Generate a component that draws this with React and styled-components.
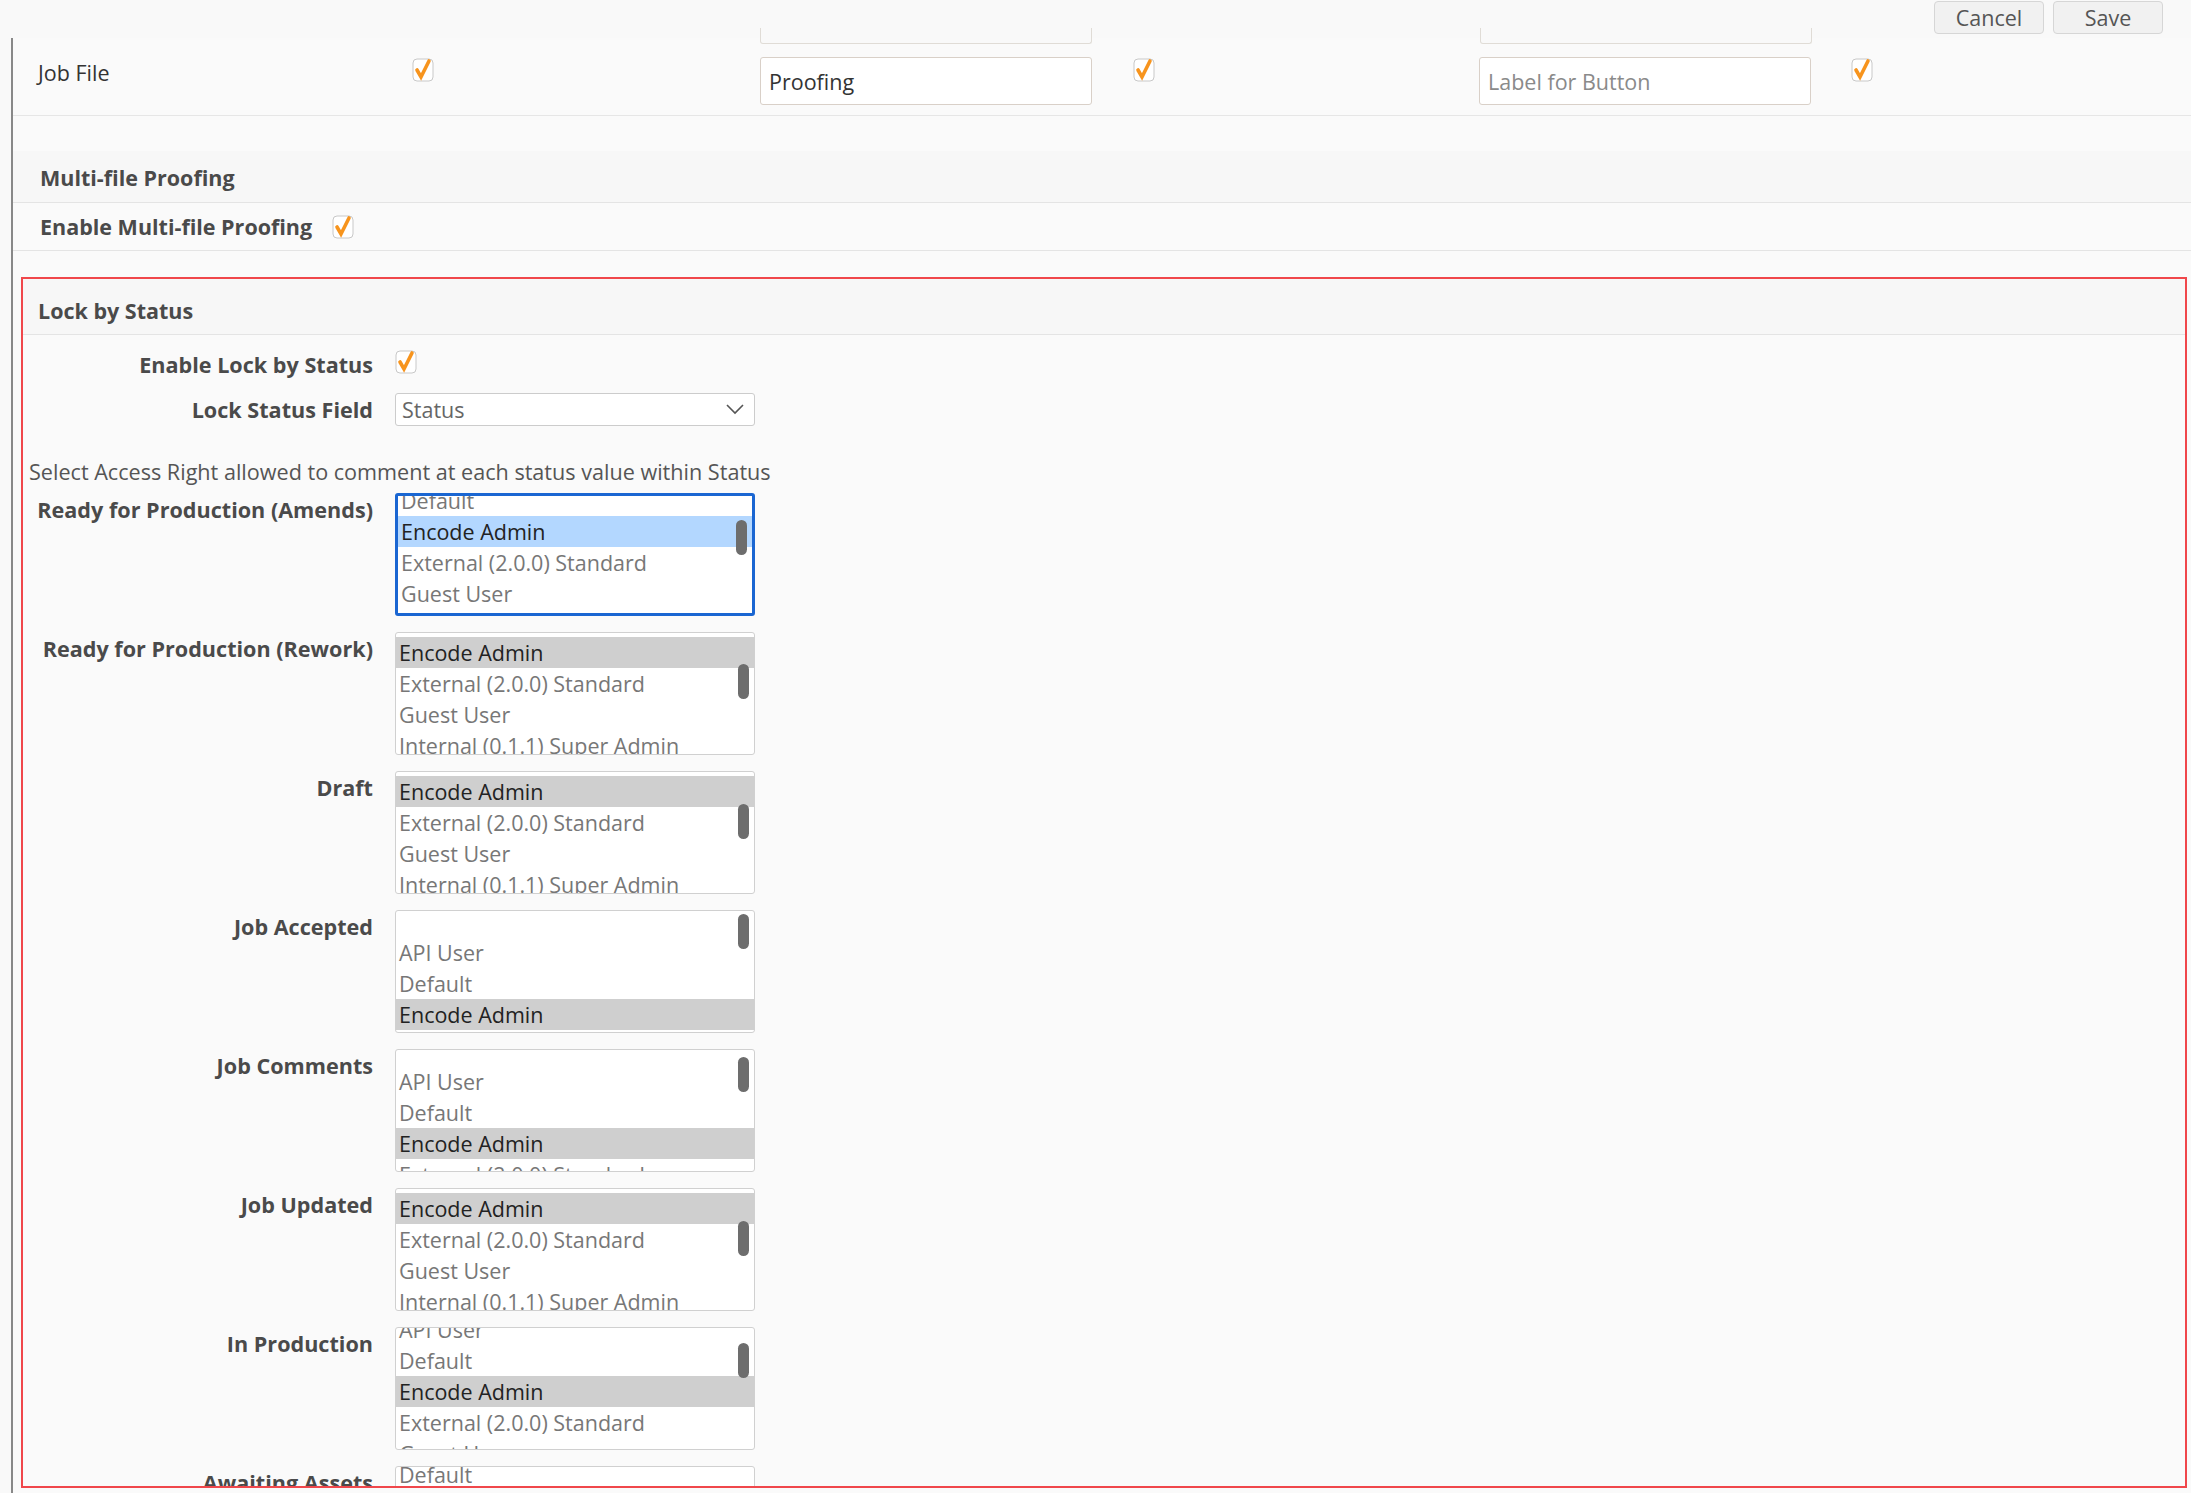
import React from "react";
import styled, { createGlobalStyle } from "styled-components";

const Global = createGlobalStyle`
  html, body { margin: 0; padding: 0; background: #f9f9f9; }
  body { font-family: "Open Sans", "Noto Sans", sans-serif; color: #555; }
`;

const Page = styled.div`
  width: 2191px; height: 1493px; overflow: hidden; position: relative; background: #f9f9f9;
`;
const TopBar = styled.div`
  height: 38px; display: flex; justify-content: flex-end; align-items: flex-start; gap: 9px;
  padding-right: 28px; box-sizing: border-box;
`;
const Btn = styled.button`
  width: 110px; height: 33px; margin-top: 1px; border: 1px solid #d6d6d6; border-radius: 4px;
  background: #f1f1f1; font-family: inherit; font-size: 21.5px; color: #555; padding: 0;
`;
const Body = styled.div`
  border-left: 2px solid #888; margin-left: 11px; min-height: 1460px; background: #fafafa;
`;
const JobRow = styled.div`
  height: 77px; border-bottom: 1px solid #e6e6e6; display: grid;
  grid-template-columns: 399px 348px 373px 346px 372px 1fr; position: relative;
`;
const Cell = styled.div`
  display: flex; align-items: flex-start; padding-top: ${p => p.$pt || 0}px;
  padding-left: ${p => p.$pl || 0}px; font-size: 21.5px; color: #333;
`;
const TextInput = styled.div`
  width: 332px; height: 48px; box-sizing: border-box; border: 1px solid #d9d0c8; border-radius: 3px;
  background: #fff; display: flex; align-items: center; padding-left: 8px; font-size: 21.5px;
  color: ${p => p.$ph ? "#8a8a8a" : "#333"}; margin-top: 19px;
`;
const GhostInput = styled.div`
  position: absolute; top: -10px; left: ${p => p.$x}px; width: 332px; height: 16px; box-sizing: border-box;
  border: 1px solid #e0dcd6; border-top: none; border-radius: 0 0 3px 3px; background: #f9f9f9;
`;
const Spacer = styled.div` height: ${p => p.$h}px; `;
const SectionHead = styled.div`
  height: ${p => p.$h || 52}px; display: flex; align-items: center; padding-left: ${p => p.$pl || 27}px;
  padding-top: ${p => p.$pt || 0}px; box-sizing: border-box;
  font-weight: 700; font-size: 21.5px; color: #4a4a4a; background: #f7f7f7; border-bottom: 1px solid #e4e4e4;
`;
const InlineRow = styled.div`
  height: 47px; display: flex; align-items: center; gap: 20px; padding-left: 27px;
  font-weight: 700; font-size: 21.5px; color: #4a4a4a; border-bottom: 1px solid #e4e4e4;
`;
const RedBox = styled.div`
  margin: 26px 4px 0 8px; border: 2px solid #f0474b; height: 1207px; overflow: hidden; background: #fafafa;
`;
const FormRow = styled.div`
  display: grid; grid-template-columns: 350px 1fr; column-gap: 22px; align-items: center;
  height: ${p => p.$h}px;
`;
const Label = styled.div`
  text-align: right; font-weight: 700; font-size: 21.6px; color: #4a4a4a; white-space: nowrap;
  padding-top: ${p => p.$pt || 0}px;
`;
const Select = styled.div`
  width: 360px; height: 33px; box-sizing: border-box; border: 1px solid #ccc; border-radius: 3px; background: #fff;
  display: flex; align-items: center; justify-content: space-between; padding: 0 10px 0 6px; font-size: 21.5px; color: #666;
`;
const Hint = styled.div` font-size: 21.6px; color: #555; padding: 26px 0 0 6px; height: 48px; box-sizing: border-box; `;
const ListBox = styled.div`
  width: 360px; height: 123px; box-sizing: border-box; background: #fff; position: relative; overflow: hidden;
  border: ${p => p.$focus ? "3px solid #1a66d2" : "1px solid #d0d0d0"}; border-radius: 3px;
`;
const Opt = styled.div`
  height: 31px; line-height: 31px; padding-left: 3px; font-size: 21.5px; white-space: nowrap;
  color: ${p => p.$sel ? "#222" : "#777"};
  background: ${p => p.$sel === "blue" ? "#b3d7ff" : p.$sel ? "#cfcfcf" : "transparent"};
`;
const Thumb = styled.div`
  position: absolute; right: 5px; width: 11px; height: 35px; border-radius: 6px; background: #6d6d6d;
`;
const ListRow = styled.div`
  display: grid; grid-template-columns: 350px 1fr; column-gap: 22px; height: 139px; align-items: start;
`;

const Check = () => (
  <svg width="22" height="24" viewBox="0 0 22 24">
    <rect x="1" y="1" width="20" height="22" rx="4" fill="#fff" stroke="#c8c8c8" />
    <path d="M5 12 L9 19 L17 3" fill="none" stroke="#f7941d" strokeWidth="3.6" strokeLinecap="round" />
  </svg>
);

const lists = [
  { label: "Ready for Production (Amends)", focus: true, off: -11, thumb: 24, items: ["Default", ["Encode Admin", "blue"], "External (2.0.0) Standard", "Guest User", "Internal (0.1.1) Super Admin"] },
  { label: "Ready for Production (Rework)", off: 4, thumb: 31, items: [["Encode Admin", 1], "External (2.0.0) Standard", "Guest User", "Internal (0.1.1) Super Admin"] },
  { label: "Draft", off: 4, thumb: 32, items: [["Encode Admin", 1], "External (2.0.0) Standard", "Guest User", "Internal (0.1.1) Super Admin"] },
  { label: "Job Accepted", off: 26, thumb: 3, items: ["API User", "Default", ["Encode Admin", 1]] },
  { label: "Job Comments", off: 16, thumb: 7, items: ["API User", "Default", ["Encode Admin", 1], "External (2.0.0) Standard"] },
  { label: "Job Updated", off: 4, thumb: 32, items: [["Encode Admin", 1], "External (2.0.0) Standard", "Guest User", "Internal (0.1.1) Super Admin"] },
  { label: "In Production", off: -14, thumb: 15, items: ["API User", "Default", ["Encode Admin", 1], "External (2.0.0) Standard", "Guest User"] },
  { label: "Awaiting Assets", off: -8, thumb: 20, items: ["Default", ["Encode Admin", 1], "External (2.0.0) Standard"] },
];

export default function App() {
  return (
    <Page>
      <Global />
      <TopBar><Btn>Cancel</Btn><Btn>Save</Btn></TopBar>
      <Body>
        <JobRow>
          <GhostInput $x={747} /><GhostInput $x={1467} />
          <Cell $pl={25} $pt={20}>Job File</Cell>
          <Cell $pt={20}><Check /></Cell>
          <Cell><TextInput>Proofing</TextInput></Cell>
          <Cell $pt={20}><Check /></Cell>
          <Cell><TextInput $ph>Label for Button</TextInput></Cell>
          <Cell $pt={20}><Check /></Cell>
        </JobRow>
        <Spacer $h={35} />
        <SectionHead $pt={2}>Multi-file Proofing</SectionHead>
        <InlineRow>Enable Multi-file Proofing <Check /></InlineRow>
        <RedBox>
          <SectionHead $h={56} $pl={15} $pt={8}>Lock by Status</SectionHead>
          <Spacer $h={6} />
          <FormRow $h={46}><Label>Enable Lock by Status</Label><div><Check /></div></FormRow>
          <FormRow $h={44}><Label>Lock Status Field</Label>
            <Select>Status
              <svg width="18" height="11" viewBox="0 0 18 11"><path d="M1 1 L9 9 L17 1" fill="none" stroke="#555" strokeWidth="1.6" /></svg>
            </Select>
          </FormRow>
          <Hint>Select Access Right allowed to comment at each status value within Status</Hint>
          <Spacer $h={14} />
          {lists.map(l => (
            <ListRow key={l.label}>
              <Label $pt={2}>{l.label}</Label>
              <ListBox $focus={l.focus}>
                <div style={{ transform: `translateY(${l.off}px)` }}>
                  {l.items.map(it => Array.isArray(it)
                    ? <Opt key={it[0]} $sel={it[1] === "blue" ? "blue" : true}>{it[0]}</Opt>
                    : <Opt key={it}>{it}</Opt>)}
                </div>
                <Thumb style={{ top: l.thumb }} />
              </ListBox>
            </ListRow>
          ))}
        </RedBox>
      </Body>
    </Page>
  );
}
